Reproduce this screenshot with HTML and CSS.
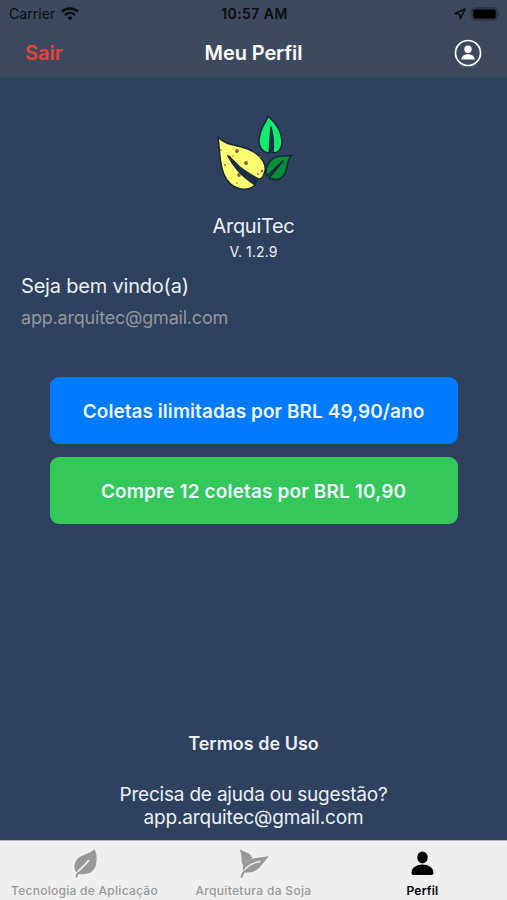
FILE: index.html
```html
<!DOCTYPE html>
<html lang="pt-BR">
<head>
<meta charset="utf-8">
<title>Meu Perfil</title>
<link rel="stylesheet" href="styles.css">
</head>
<body>
<div class="app">
  <header class="header">
    <div class="status">
      <div class="carrier"><span>Carrier</span>
        <svg width="18" height="14" viewBox="0 0 18 14" fill="none" stroke="#0b0d11" stroke-width="2.5"><path d="M1 4.700C5.500.3 12.500.3 17 4.700M4 8.100c2.900-2.700 7.100-2.700 10 0"/><path d="M9 13.400 6.300 10.600q2.700-2 5.400 0z" fill="#0b0d11" stroke="none"/></svg>
      </div>
      <span class="time">10:57 AM</span>
      <div class="power">
        <svg width="12" height="12" viewBox="0 0 12 12" fill="none" stroke="#0b0d11" stroke-width="1.400" stroke-linejoin="round"><path d="M1 5.500 11 1 6.500 10.500 5.700 6.200z"/></svg>
        <svg width="29" height="14" viewBox="0 0 29 14"><rect x=".6" y=".6" width="25.800" height="12.800" rx="4" fill="#2e3748" stroke="#2e3748"/><rect x="2.300" y="2.600" width="22.400" height="8.800" rx="2" fill="#000"/><path d="M27.500 4.800q1.600 2.200 0 4.400z" fill="#252e3d"/></svg>
      </div>
    </div>
    <div class="nav">
      <span class="exit">Sair</span>
      <h1 class="title">Meu Perfil</h1>
      <svg class="avatar" width="28" height="28" viewBox="0 0 28 28"><circle cx="14" cy="14" r="12.500" fill="none" stroke="#fff" stroke-width="1.700"/><circle cx="14" cy="10.200" r="3.700" fill="#fff"/><path d="M7.300 20.500c0-7 13.400-7 13.400 0z" fill="#fff"/></svg>
    </div>
  </header>
  <main class="main">
    <svg class="logo" width="84" height="80" viewBox="0 0 84 80" stroke="#172738" stroke-width="1.500" stroke-linejoin="round">
      <path fill="#ffff72" d="M6 23C15 33 28 30 40 37C50 42 56 52 52 60Q50 66 46 65L28 54L16 42C23 55 30 62 43 71C36 78 22 76 15 66C7 54 8 36 6 23Z"/>
      <path fill="#1b3043" stroke="none" d="m15 41 3 1c8 9 17 17 30 23l-5 5C30 64 22 54 15 41z"/>
      <path fill="#11ec70" d="M56 2C65 10 70 18 70 28C70 35 66 39 61 39C62 30 61 21 59 13C58 23 58 31 57 39C49 38 45 30 48 21C49 13 54 9 56 2Z"/>
      <path fill="#1b3043" stroke="none" d="M59 13c3 8 3 17 2 26h-4c1-9 1-18 2-26z"/>
      <path fill="#098d39" d="M80 41C73 47 77 58 70 63C67 66 62 66 57 64L71 47L55 62C52 54 57 46 64 43C70 41 74 43 80 41Z"/>
      <g fill="#8d6545" stroke="none"><circle cx="25" cy="37" r="2"/><circle cx="34" cy="49" r="2.100"/><circle cx="27" cy="61" r="1.900"/><circle cx="13" cy="51" r="1"/><circle cx="48" cy="43" r="1"/><circle cx="50" cy="57" r="1.300"/><circle cx="21" cy="42" r=".7"/><circle cx="9" cy="36" r=".8"/><circle cx="42" cy="38" r=".7"/><circle cx="46" cy="60" r="1"/><circle cx="25" cy="69" r=".8"/></g>
    </svg>
    <p class="name">ArquiTec</p>
    <p class="version">V. 1.2.9</p>
    <section class="welcome"><p class="greeting">Seja bem vindo(a)</p><p class="email">app.arquitec@gmail.com</p></section>
    <div class="actions">
      <button class="button"><span class="annual">Coletas ilimitadas por BRL 49,90/ano</span></button>
      <button class="button green"><span class="pack">Compre 12 coletas por BRL 10,90</span></button>
    </div>
    <footer class="support"><p class="terms">Termos de Uso</p><p class="help">Precisa de ajuda ou sugestão?</p><p class="contact">app.arquitec@gmail.com</p></footer>
  </main>
  <nav class="tabs">
    <div class="tab"><svg width="28" height="32" viewBox="0 0 28 32" fill="none" stroke-linecap="round"><path fill="#999" d="M23.500 1C18 7 7 6 4 15c-2 6 1 11 5 11 8 1 14-2 16-9 1-6 1-11-1.500-16z"/><path stroke="#efefef" stroke-width="1.600" d="M17.500 12.500C14 18 8 21 5.500 26"/><path stroke="#999" stroke-width="2" d="M8 24.500Q6 26 5.500 28.500"/></svg><span class="tech">Tecnologia de Aplicação</span></div>
    <div class="tab"><svg width="34" height="32" viewBox="0 0 34 32" fill="none" stroke-linecap="round"><path fill="#999" d="M2.500 1c5 4 11 3 13 9-5 2-8 5-9 8C3 13 6 8 2.500 1z"/><path fill="#999" d="M32 8C23 10 14 9 9 14c-4 4-4 8-2 10 13 3 17-7 25-16z"/><path stroke="#efefef" stroke-width="1.300" d="M23 13.500C15 15 9 19 6 24"/><path stroke="#999" stroke-width="2" d="M8 23Q5.500 25 4.500 29"/></svg><span class="soy">Arquitetura da Soja</span></div>
    <div class="tab active"><svg width="28" height="32" viewBox="0 0 28 32"><ellipse cx="13.500" cy="9.500" rx="5.200" ry="5.900"/><path d="M2.500 25c0-11.500 22-11.500 22 0q0 2-2 2h-18q-2 0-2-2z"/></svg><span class="profile">Perfil</span></div>
  </nav>
</div>
</body>
</html>
```
FILE: styles.css
```css
* { box-sizing: border-box; }
body { margin: 0; font-family: Inter, "Liberation Sans", sans-serif; }
p, h1 { margin: 0; }
svg { display: block; flex: none; }
.app { width: 507px; height: 900px; display: flex; flex-direction: column; overflow: hidden; background: #2e415e; }
.header { height: 78px; background: #3d495e; }
.status { height: 27px; display: grid; grid-template-columns: 1fr 1fr 1fr; align-items: center; padding: 0 7px 0 9px; color: #0b0d11; font-size: 14px; }
.carrier, .power { display: flex; align-items: center; gap: 6px; }
.carrier { letter-spacing: .05px; }
.power { justify-content: flex-end; gap: 5px; }
.time { text-align: center; font-weight: 600; letter-spacing: .45px; }
.nav { height: 51px; display: grid; grid-template-columns: 1fr 1fr 1fr; align-items: center; padding: 0 25px; }
.exit { color: #e94239; font-size: 20px; font-weight: 600; }
.title { color: #fff; text-align: center; font-size: 20px; font-weight: 600; letter-spacing: -.1px; }
.avatar { justify-self: end; }
.main { height: 762px; display: flex; flex-direction: column; align-items: center; color: #ecf0f5; white-space: nowrap; }
.logo { margin-top: 36px; }
.name { margin-top: 18px; font-size: 20px; line-height: 28px; letter-spacing: -.3px; }
.version { margin-top: 2px; font-size: 14px; line-height: 20px; letter-spacing: .1px; }
.welcome { align-self: stretch; padding: 10px 21px 0; }
.greeting { font-size: 20px; line-height: 28px; letter-spacing: -.2px; }
.email { margin-top: 5px; font-size: 18px; line-height: 26px; letter-spacing: -.2px; color: #91979c; }
.actions { width: 408px; margin-top: 46px; display: grid; gap: 13px; }
.button { height: 67px; border: 0; border-radius: 9px; padding: 1px 0 0; background: #007aff; color: #ecf6ff; font: 600 19px Inter, sans-serif; }
.annual { letter-spacing: .05px; }
.pack { letter-spacing: .14px; }
.green { background: #34c759; }
.support { margin-top: auto; padding-bottom: 11px; text-align: center; font-size: 19px; line-height: 23px; }
.terms { margin-bottom: 28px; font-size: 18px; font-weight: 600; }
.help { letter-spacing: -.2px; }
.contact { letter-spacing: -.15px; }
.tabs { height: 60px; display: grid; grid-template-columns: 1fr 1fr 1fr; border-top: 1px solid #b5bac2; background: #efefef; }
.tab { display: flex; flex-direction: column; align-items: center; padding-top: 7px; color: #999; font-size: 12px; font-weight: 500; line-height: 18px; white-space: nowrap; }
.tab span { margin-top: 2px; }
.tech { letter-spacing: .27px; }
.soy { letter-spacing: .33px; }
.active { color: #000; font-weight: 600; }
.profile { letter-spacing: .2px; }
```
